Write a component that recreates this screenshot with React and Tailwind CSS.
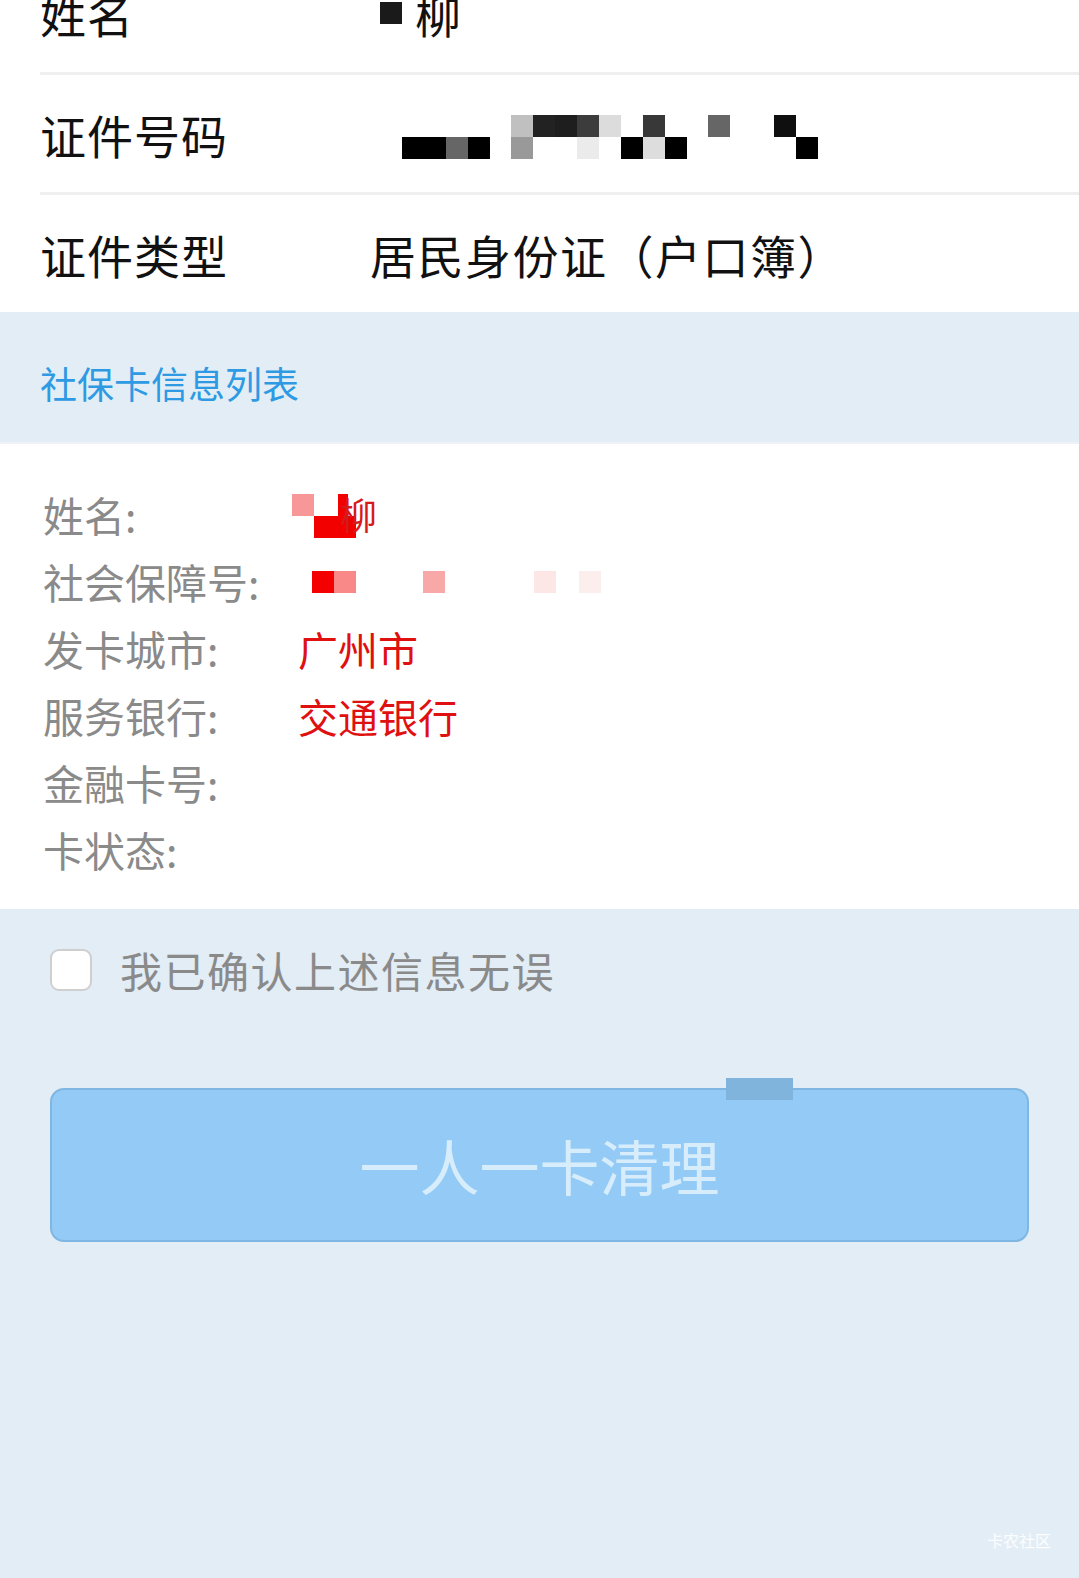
import React from "react";

const font = { fontFamily: '"Noto Sans CJK SC", "Noto Sans", sans-serif' };

// 证件号码 마스킹 모자이크 (열 단위 22px)
const idRowA = { 5: "#c0c0c0", 6: "#222222", 7: "#1e1e1e", 8: "#3c3c3c", 9: "#dcdcdc", 11: "#383838", 14: "#666666", 17: "#0f0f0f" };
const idRowB = { 0: "#000000", 1: "#000000", 2: "#666666", 3: "#000000", 5: "#999999", 8: "#ebebeb", 10: "#000000", 11: "#dddddd", 12: "#000000", 18: "#000000" };

function MosaicRow({ cells }) {
  return (
    <div className="flex">
      {Array.from({ length: 19 }).map((_, i) => (
        <div key={i} className="h-[22px] w-[21.9px]" style={{ backgroundColor: cells[i] || "transparent" }} />
      ))}
    </div>
  );
}

function TopRow({ label, children, className = "" }) {
  return (
    <div className={`ml-10 flex items-center border-b-[3px] border-[#efefef] ${className}`}>
      <div className="w-[330px] shrink-0 text-[46px] leading-none tracking-[1px] text-[#111]">{label}</div>
      <div className="flex items-center">{children}</div>
    </div>
  );
}

function InfoRow({ label, children }) {
  return (
    <div className="flex h-[67px] items-center">
      <div className="w-[255px] shrink-0 text-[41px] leading-none text-[#8a8a8a]">{label}</div>
      <div className="flex items-center text-[40px] leading-none text-[#e01010]">{children}</div>
    </div>
  );
}

export default function App() {
  return (
    <div className="relative min-h-[1578px] w-full overflow-hidden bg-[#e2edf5]" style={font}>
      {/* 상단 개인정보 */}
      <section className="bg-white">
        <TopRow label="姓名" className="-mt-[47px] h-[122px]">
          <div className="ml-[10px] h-[22px] w-[22px] bg-[#1a1a1a]" />
          <span className="ml-[13px] text-[46px] leading-none text-[#111]">柳</span>
        </TopRow>
        <TopRow label="证件号码" className="h-[120px]">
          <div className="ml-[32px] mt-[6px] flex flex-col">
            <MosaicRow cells={idRowA} />
            <MosaicRow cells={idRowB} />
          </div>
        </TopRow>
        <div className="ml-10 flex h-[117px] items-center">
          <div className="w-[330px] shrink-0 text-[46px] leading-none tracking-[1px] text-[#111]">证件类型</div>
          <div className="text-[46px] leading-none tracking-[1.5px] text-[#111]">居民身份证（户口簿）</div>
        </div>
      </section>

      {/* 목록 헤더 */}
      <div className="flex h-[132px] items-center border-b-2 border-[#eef1f5] pl-10 pt-[12px] text-[37px] leading-none text-[#2d9ae3]">
        社保卡信息列表
      </div>

      {/* 카드 정보 */}
      <section className="bg-white px-[43px] pb-[26px] pt-[37px]">
        <InfoRow label="姓名:">
          <div className="relative -ml-[6px] h-[46px] w-[90px]">
            <div className="absolute left-0 top-[2px] h-[22px] w-[22px] bg-[#f79797]" />
            <div className="absolute left-[22px] top-[24px] h-[22px] w-[42px] bg-[#f20000]" />
            <div className="absolute left-[46px] top-[2px] h-[22px] w-[10px] bg-[#f20000]" />
            <span className="absolute left-[48px] top-[4px] text-[37px] leading-none text-[#d51a1a]">柳</span>
          </div>
        </InfoRow>
        <InfoRow label="社会保障号:">
          <div className="flex">
            <div className="ml-[14px] h-[22px] w-[22px] bg-[#f40000]" />
            <div className="h-[22px] w-[22px] bg-[#f98888]" />
            <div className="ml-[67px] h-[22px] w-[22px] bg-[#f9a8a8]" />
            <div className="ml-[89px] h-[22px] w-[22px] bg-[#fde6e6]" />
            <div className="ml-[23px] h-[22px] w-[22px] bg-[#fdeeee]" />
          </div>
        </InfoRow>
        <InfoRow label="发卡城市:">广州市</InfoRow>
        <InfoRow label="服务银行:">交通银行</InfoRow>
        <InfoRow label="金融卡号:" />
        <InfoRow label="卡状态:" />
      </section>

      {/* 확인 체크 */}
      <label className="mt-[40px] flex items-center pl-[50px]">
        <span className="h-[42px] w-[42px] rounded-[9px] border-2 border-[#cfcfcf] bg-white" />
        <span className="ml-[28px] text-[42px] leading-none tracking-[1.5px] text-[#8a8a8a]">我已确认上述信息无误</span>
      </label>

      {/* 버튼 */}
      <div className="mt-[97px] px-[50px]">
        <button className="relative flex h-[154px] w-full items-center justify-center rounded-[14px] border-2 border-[#7fb6e2] bg-[#93cbf6] text-[60px] leading-none text-[#d8edfc]">
          <span className="absolute -top-[12px] left-[674px] h-[22px] w-[67px] bg-[#80b4dd]" />
          一人一卡清理
        </button>
      </div>

      {/* 워터마크 */}
      <div className="absolute bottom-[30px] right-[28px] text-[16px] leading-none text-white/90">卡农社区</div>
    </div>
  );
}
